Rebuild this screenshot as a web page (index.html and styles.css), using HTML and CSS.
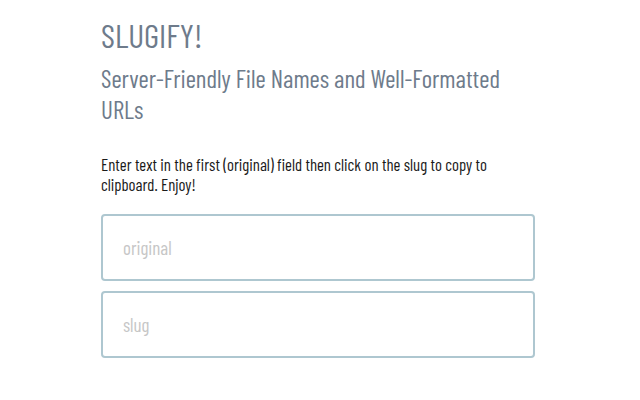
FILE: index.html
```html
<!DOCTYPE html>
<html lang="en">
<head>
<meta charset="utf-8">
<title>Slugify</title>
<link rel="stylesheet" href="styles.css">
</head>
<body>
<main class="container">
  <h1 class="title">SLUGIFY!</h1>
  <h2 class="subtitle">Server-Friendly File Names and Well-Formatted URLs</h2>
  <p class="intro">Enter text in the first (original) field then click on the slug to copy to clipboard. Enjoy!</p>
  <div class="fields">
    <input class="field" type="text" placeholder="original">
    <input class="field" type="text" placeholder="slug" readonly>
  </div>
</main>
</body>
</html>
```
FILE: styles.css
```css
html, body {
  margin: 0;
  padding: 0;
  background: #ffffff;
}
body {
  font-family: "Barlow Condensed", "Liberation Sans Narrow", sans-serif;
}
.container {
  width: 434px;
  margin: 0 0 0 101px;
  padding-top: 14px;
}
.title {
  margin: 0;
  font-size: 33.5px;
  line-height: 41px;
  font-weight: 400;
  color: #6e7b8b;
}
.subtitle {
  margin: 8px 0 0;
  font-size: 25px;
  line-height: 31px;
  font-weight: 400;
  color: #6e7b8b;
}
.intro {
  margin: 29px 0 0;
  font-size: 16.8px;
  line-height: 20px;
  font-weight: 400;
  color: #1a1a1a;
}
.fields {
  margin-top: 20px;
  display: flex;
  flex-direction: column;
  gap: 10px;
}
.field {
  box-sizing: border-box;
  width: 100%;
  height: 67px;
  margin: 0;
  padding: 0 20px;
  border: 2px solid #aec7d0;
  border-radius: 4px;
  background: #ffffff;
  font-family: "Barlow Condensed", sans-serif;
  font-size: 19px;
  color: #333;
  outline: none;
}
.field::placeholder {
  color: #c6c6c6;
}
```
